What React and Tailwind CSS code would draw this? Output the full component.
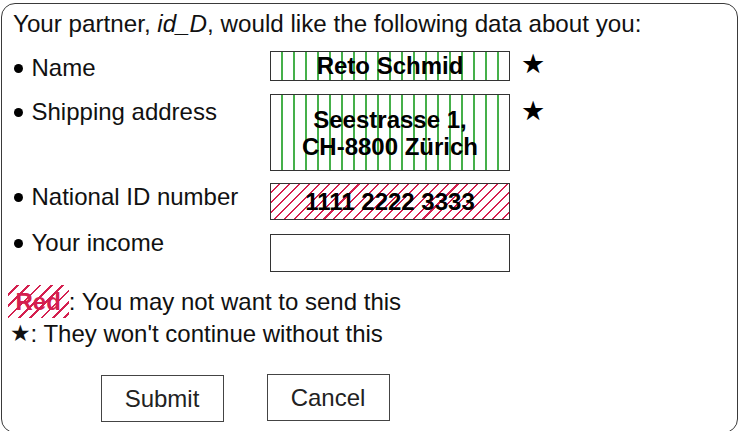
import React from "react";

const green =
  "bg-[repeating-linear-gradient(90deg,transparent_0px,transparent_10px,#45b04a_10px,#45b04a_12px)]";
const red =
  "bg-[repeating-linear-gradient(135deg,transparent_0px,transparent_5.5px,#d4204f_5.5px,#d4204f_7px)]";
const redWide =
  "bg-[repeating-linear-gradient(135deg,transparent_0px,transparent_6px,#d4204f_6px,#d4204f_8px)]";

function Bullet({ children, className = "" }) {
  return (
    <div className={"w-[247px] shrink-0 flex items-center text-[24px] leading-[27px] text-[#111] " + className}>
      <span className="ml-[0.5px] mr-[9px] mt-[2px] w-[9px] h-[9px] rounded-full bg-black" />
      <span>{children}</span>
    </div>
  );
}

function Star({ className = "" }) {
  return <span className={"ml-[1px] text-[27px] leading-none text-black " + className}>★</span>;
}

const field = "w-[240px] shrink-0 border-[1.5px] border-[#333]";

export default function App() {
  return (
    <div className="w-[742px] h-[431px] overflow-hidden bg-white font-['Liberation_Sans',Arial,sans-serif]">
      <div className="ml-[1px] mt-[3px] w-[737px] h-[430px] rounded-[14px] border-[1.5px] border-[#3a3a3a] pl-[11px] pt-[6px]">
        <p className="text-[24.2px] leading-[27px] text-[#111]">
          Your partner, <i>id_D</i>, would like the following data about you:
        </p>

        <div className="mt-[13.5px] flex flex-col">
          <div className="flex items-start gap-x-[10px]">
            <Bullet className="mt-[3.5px]">Name</Bullet>
            <div className={field + " h-[30px] flex items-center justify-center text-[24px] font-bold leading-none " + green}>
              Reto Schmid
            </div>
            <Star className="mt-[0px]" />
          </div>

          <div className="mt-[13px] flex items-start gap-x-[10px]">
            <Bullet className="mt-[3.5px]">Shipping address</Bullet>
            <div className={field + " h-[77px] flex flex-col items-center justify-center text-[24px] font-bold leading-[27px] " + green}>
              <span>Seestrasse 1,</span>
              <span>CH-8800 Zürich</span>
            </div>
            <Star className="mt-[4px]" />
          </div>

          <div className="mt-[12px] flex items-start gap-x-[10px]">
            <Bullet className="-mt-[0.5px]">National ID number</Bullet>
            <div className={field + " h-[37px] flex items-center justify-center text-[24px] font-bold leading-none " + red}>
              1111 2222 3333
            </div>
          </div>

          <div className="mt-[14px] flex items-start gap-x-[10px]">
            <Bullet className="-mt-[5.5px]">Your income</Bullet>
            <div className={field + " h-[38px] bg-white"} />
          </div>
        </div>

        <div className="mt-[13px] -ml-[5.5px] flex items-center text-[24px] leading-[27px] text-[#111]">
          <span className={"px-[8px] py-[3px] text-[#d4204f] font-bold " + redWide}>Red</span>
          <span>: You may not want to send this</span>
        </div>
        <div className="mt-[1.5px] -ml-[3.5px] flex items-center text-[24px] leading-[27px] text-[#111]">
          <span className="text-[23px]">★</span>
          <span>: They won't continue without this</span>
        </div>

        <div className="mt-[27.5px] flex items-start pl-[87.5px] gap-[43px]">
          <button className="mt-[1px] w-[123px] h-[47px] border-[1.5px] border-[#444] bg-white text-[24px] text-[#222]">
            Submit
          </button>
          <button className="w-[123px] h-[47px] border-[1.5px] border-[#444] bg-white text-[24px] text-[#222]">
            Cancel
          </button>
        </div>
      </div>
    </div>
  );
}
